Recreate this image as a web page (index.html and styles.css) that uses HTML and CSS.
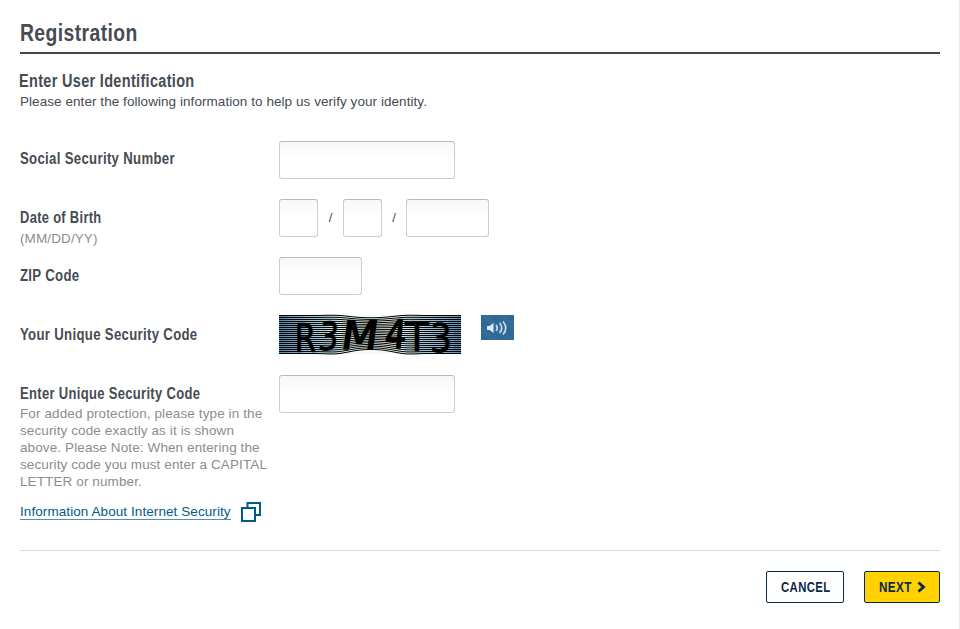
FILE: index.html
```html
<!DOCTYPE html>
<html lang="en">
<head>
<meta charset="utf-8">
<title>Registration</title>
<link rel="stylesheet" href="styles.css">
</head>
<body>
<main class="panel">
  <h1><span class="fit">Registration</span></h1>
  <h2><span class="fit">Enter User Identification</span></h2>
  <p class="intro">Please enter the following information to help us verify your identity.</p>
  <form class="fields">
    <div class="row ssn">
      <label class="name" for="ssn">Social Security Number</label>
      <input id="ssn" class="wide">
    </div>
    <div class="row dob">
      <div class="label"><span class="name">Date of Birth</span><span class="hint">(MM/DD/YY)</span></div>
      <div class="date"><input class="short"><span>/</span><input class="short"><span>/</span><input class="mid"></div>
    </div>
    <div class="row zip">
      <label class="name" for="zip">ZIP Code</label>
      <input id="zip" class="mid">
    </div>
    <div class="row code">
      <span class="name">Your Unique Security Code</span>
      <svg class="captcha" width="182" height="39" viewBox="0 0 182 39">
        <defs>
          <linearGradient id="bg"><stop offset="0" stop-color="#5088b4"/><stop offset=".2" stop-color="#a0cbda"/><stop offset=".4" stop-color="#f1fcf3"/><stop offset=".62" stop-color="#f1fcf3"/><stop offset=".8" stop-color="#a8cede"/><stop offset="1" stop-color="#5a8db8"/></linearGradient>
        </defs>
        <rect width="182" height="39" fill="url(#bg)"/>
        <g class="waves"></g>
        <g class="glyphs"><text transform="translate(15.500 37) scale(.8 1)">R</text><text transform="translate(38.500 35) skewX(-6) scale(.8 1)">3</text><text class="heavy" transform="translate(61 33.500) skewX(-8) scale(1.080 1)">M</text><text class="heavy" transform="translate(105 32.500) skewX(-5) scale(.86 1)">4</text><text transform="translate(126 36) scale(1 1)">T</text><text transform="translate(151 37) scale(.88 1)">3</text></g>
      </svg>
      <button type="button" class="audio" aria-label="Play code"><svg width="33" height="25" viewBox="0 0 33 25"><path d="M6 11h2.500l4-3v10l-4-3H6z" fill="#dcebf5"/><path d="M15 10q2.500 3 0 6M18.500 8q4.500 5 0 10M22 6.500q5.500 6.500 0 13" fill="none" stroke="#c5dced" stroke-width="1.700"/></svg></button>
    </div>
    <div class="row enter">
      <div class="label"><label class="name" for="code">Enter Unique Security Code</label>
        <p class="hint">For added protection, please type in the<br>security code exactly as it is shown<br>above. Please Note: When entering the<br>security code you must enter a CAPITAL<br>LETTER or number.</p>
      </div>
      <input id="code" class="wide">
    </div>
    <div class="info"><a href="#">Information About Internet Security</a><svg width="21" height="21" viewBox="0 0 21 21" fill="#fff" stroke="#005b88" stroke-width="2"><path d="M6.500 2H19v12H6.500z"/><path d="M1 7h13v13H1z"/></svg></div>
    <div class="actions">
      <button type="button" class="cancel"><span class="fit">CANCEL</span></button>
      <button type="button" class="next"><span class="fit">NEXT</span><svg width="9" height="12" viewBox="0 0 9 12"><path d="M1.500 1.500L6.500 6l-5 4.500" fill="none" stroke="#0b2a4a" stroke-width="2.800"/></svg></button>
    </div>
  </form>
</main>
<script src="waves.js"></script>
</body>
</html>
```
FILE: styles.css
```css
* { box-sizing: border-box; }
body { margin: 0; background: #fff; font-family: "Liberation Sans", Arial, sans-serif; color: #464b54; }
.panel { height: 629px; padding: 16px 19px 0 20px; border-right: 1px solid #e0f1fa; overflow: hidden; }
h1, h2, .name, .actions button { font-family: "Liberation Sans", Arial, sans-serif; font-weight: bold; }
.fit, .name { transform-origin: 0 50%; white-space: nowrap; }
.fit { display: inline-block; }
h1 { margin: 0; height: 38px; border-bottom: 2px solid #3f4852; font-size: 24px; line-height: 33px; letter-spacing: .5px; }
h1 .fit { transform: scaleX(.806); }
h2 { margin: 16px 0 0 -1px; font-size: 18px; line-height: 22px; letter-spacing: .4px; }
h2 .fit { transform: scaleX(.805); }
.intro { margin: 1px 0 0; font-size: 13.5px; line-height: 18px; letter-spacing: .06px; }
.row { display: grid; grid-template-columns: 259px auto; justify-content: start; align-items: start; }
.ssn { margin-top: 30px; height: 58px; }
.dob { height: 58px; }
.zip { height: 58px; }
.code { height: 60px; grid-template-columns: 259px 182px auto; }
.enter { height: 126px; }
.name { display: block; padding-top: 8px; font-size: 16px; line-height: 20px; letter-spacing: .4px; transform: scaleX(.822); }
.dob .name { padding-top: 9px; transform: scaleX(.806); }
.zip .name { padding-top: 9px; }
.code .name { padding-top: 10px; }
.enter .name { padding-top: 9px; transform: scaleX(.812); }
.hint { display: block; margin: 0; color: #8b8d91; font-size: 13.5px; line-height: 16.9px; letter-spacing: .11px; white-space: nowrap; }
.dob .hint { margin-top: 3px; }
.enter .hint { margin-top: 2px; }
input { display: block; height: 38px; margin: 0; border: 1px solid #ccc; border-top-color: #b9b9b9; border-radius: 3px; background: linear-gradient(#f7f7f7, #fff 50%); outline: 0; }
.wide { width: 176px; }
.short { width: 39px; }
.mid { width: 83px; }
.date { display: flex; }
.date span { width: 25px; font-size: 13px; line-height: 38px; text-align: center; }
.date span:last-of-type { width: 24px; }
.captcha { display: block; overflow: visible; }
.waves { fill: none; stroke: #000; stroke-width: 1; }
.glyphs { font: 39px "DejaVu Sans", sans-serif; fill: #000; stroke: #000; stroke-width: .7; }
.heavy { stroke-width: 1.5; }
.audio { width: 33px; height: 25px; margin: 0 0 0 20px; padding: 0; border: 0; background: repeating-linear-gradient(45deg, #2b6593 0 1px, #36709b 1px 2px); }
.audio svg { display: block; }
.info { display: flex; align-items: center; height: 21px; gap: 10px; }
.info a { color: #005b88; font-size: 13.5px; line-height: 15px; letter-spacing: .08px; border-bottom: 1px solid #5290b0; text-decoration: none; }
.actions { display: flex; justify-content: flex-end; gap: 20px; margin-top: 28px; padding-top: 20px; border-top: 1px solid #d9d9d9; }
.actions button { display: flex; align-items: center; height: 32px; padding: 0 0 0 14px; border: 1px solid #0b2a4a; border-radius: 2px; background: #fff; color: #0b2a4a; font-size: 15px; letter-spacing: .5px; }
.actions .fit { padding-bottom: 1px; }
.actions .cancel { width: 78px; }
.actions .cancel .fit { width: 48px; transform: scaleX(.757); }
.actions .next { width: 76px; background: #ffd200; }
.actions .next .fit { width: 38px; transform: scaleX(.78); }
```
FILE: waves.js
```js
// Horizontal interference lines that pinch toward the middle of the code.
const waves = document.querySelector(".waves");
for (let y = 0.5; y < 39; y += 2) {
  let d = "";
  for (let x = 0; x <= 182; x += 2) {
    const bulge = Math.exp(-Math.pow((x - 92) / 38, 4));
    const ripple = Math.cos((x - 92) / 20) * (y - 14) / 6;
    d += (x ? "L" : "M") + x + " " + (y - bulge * ripple).toFixed(2);
  }
  const line = document.createElementNS("http://www.w3.org/2000/svg", "path");
  line.setAttribute("d", d);
  waves.append(line);
}
```
